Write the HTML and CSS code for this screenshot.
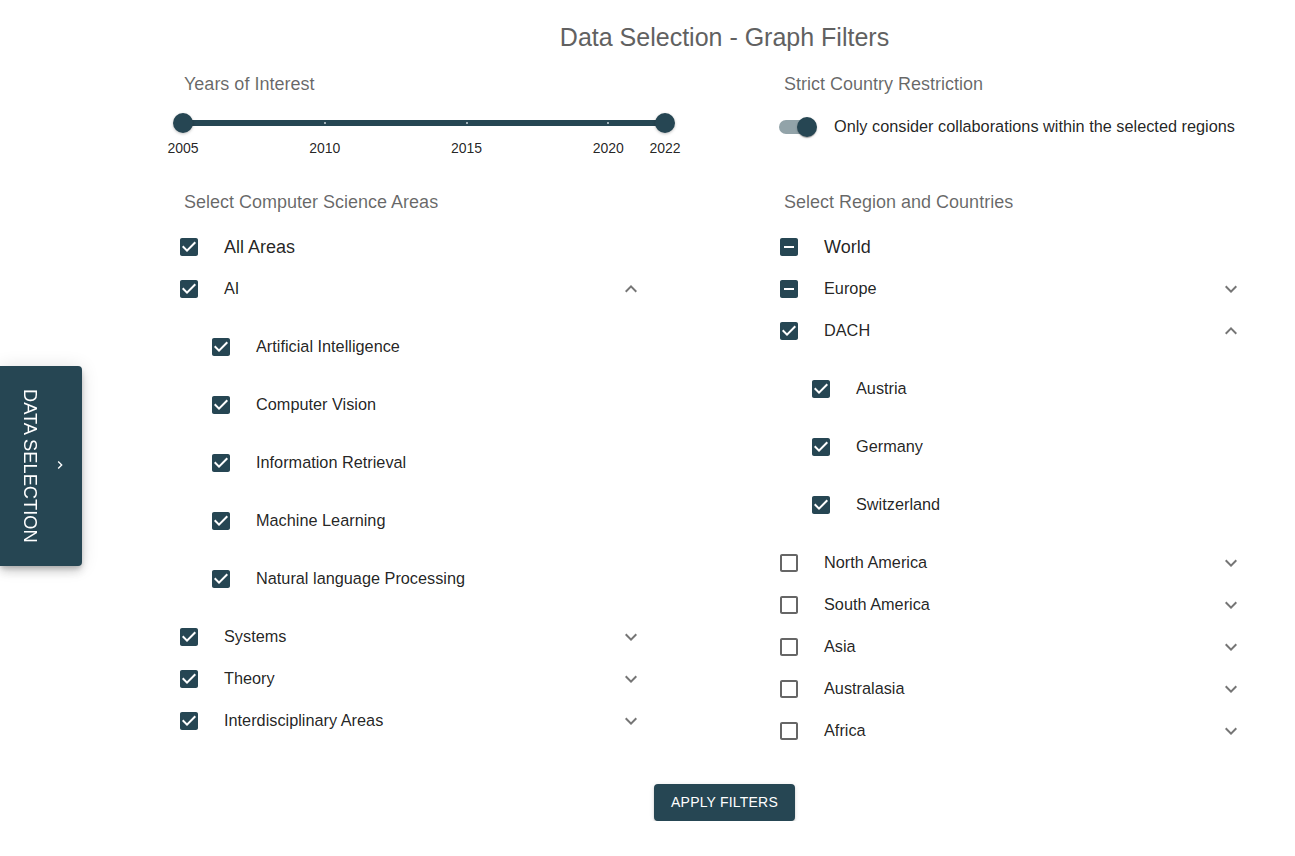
FILE: index.html
```html
<!DOCTYPE html>
<html lang="en">
<head>
<meta charset="utf-8">
<title>Data Selection - Graph Filters</title>
<link rel="stylesheet" href="styles.css">
</head>
<body>
<button class="drawer-tab" type="button">
  <span class="drawer-label">DATA SELECTION</span>
  <svg class="drawer-chev" viewBox="0 0 24 24"><path d="M10 6 8.59 7.41 13.17 12l-4.58 4.59L10 18l6-6z"/></svg>
</button>

<main class="main">
  <h1 class="title">Data Selection - Graph Filters</h1>

  <div class="grid">
    <section class="col">
      <div class="top-block">
        <h2 class="heading">Years of Interest</h2>
        <div class="slider">
          <div class="slider-rail">
            <span class="track"></span>
            <span class="mark" style="left:29.41%"></span>
            <span class="mark" style="left:58.82%"></span>
            <span class="mark" style="left:88.24%"></span>
            <span class="thumb" style="left:0%"></span>
            <span class="thumb" style="left:100%"></span>
          </div>
          <div class="slider-labels">
            <span class="mlabel" style="left:0%">2005</span>
            <span class="mlabel" style="left:29.41%">2010</span>
            <span class="mlabel" style="left:58.82%">2015</span>
            <span class="mlabel" style="left:88.24%">2020</span>
            <span class="mlabel" style="left:100%">2022</span>
          </div>
        </div>
      </div>

      <h2 class="heading list-heading">Select Computer Science Areas</h2>
      <ul class="list">
        <li class="row big"><svg class="cb on" viewBox="0 0 24 24"><path d="M19 3H5c-1.11 0-2 .9-2 2v14c0 1.1.89 2 2 2h14c1.11 0 2-.9 2-2V5c0-1.1-.89-2-2-2zm-9 14l-5-5 1.41-1.41L10 14.17l7.59-7.59L19 8l-9 9z"/></svg><span class="lbl">All Areas</span></li>
        <li class="row"><svg class="cb on" viewBox="0 0 24 24"><path d="M19 3H5c-1.11 0-2 .9-2 2v14c0 1.1.89 2 2 2h14c1.11 0 2-.9 2-2V5c0-1.1-.89-2-2-2zm-9 14l-5-5 1.41-1.41L10 14.17l7.59-7.59L19 8l-9 9z"/></svg><span class="lbl">AI</span><svg class="chev" viewBox="0 0 24 24"><path d="m12 8-6 6 1.41 1.41L12 10.83l4.59 4.58L18 14z"/></svg></li>
        <li>
          <ul class="sublist">
            <li class="subrow"><svg class="cb on" viewBox="0 0 24 24"><path d="M19 3H5c-1.11 0-2 .9-2 2v14c0 1.1.89 2 2 2h14c1.11 0 2-.9 2-2V5c0-1.1-.89-2-2-2zm-9 14l-5-5 1.41-1.41L10 14.17l7.59-7.59L19 8l-9 9z"/></svg><span class="lbl">Artificial Intelligence</span></li>
            <li class="subrow"><svg class="cb on" viewBox="0 0 24 24"><path d="M19 3H5c-1.11 0-2 .9-2 2v14c0 1.1.89 2 2 2h14c1.11 0 2-.9 2-2V5c0-1.1-.89-2-2-2zm-9 14l-5-5 1.41-1.41L10 14.17l7.59-7.59L19 8l-9 9z"/></svg><span class="lbl">Computer Vision</span></li>
            <li class="subrow"><svg class="cb on" viewBox="0 0 24 24"><path d="M19 3H5c-1.11 0-2 .9-2 2v14c0 1.1.89 2 2 2h14c1.11 0 2-.9 2-2V5c0-1.1-.89-2-2-2zm-9 14l-5-5 1.41-1.41L10 14.17l7.59-7.59L19 8l-9 9z"/></svg><span class="lbl">Information Retrieval</span></li>
            <li class="subrow"><svg class="cb on" viewBox="0 0 24 24"><path d="M19 3H5c-1.11 0-2 .9-2 2v14c0 1.1.89 2 2 2h14c1.11 0 2-.9 2-2V5c0-1.1-.89-2-2-2zm-9 14l-5-5 1.41-1.41L10 14.17l7.59-7.59L19 8l-9 9z"/></svg><span class="lbl">Machine Learning</span></li>
            <li class="subrow"><svg class="cb on" viewBox="0 0 24 24"><path d="M19 3H5c-1.11 0-2 .9-2 2v14c0 1.1.89 2 2 2h14c1.11 0 2-.9 2-2V5c0-1.1-.89-2-2-2zm-9 14l-5-5 1.41-1.41L10 14.17l7.59-7.59L19 8l-9 9z"/></svg><span class="lbl">Natural language Processing</span></li>
          </ul>
        </li>
        <li class="row"><svg class="cb on" viewBox="0 0 24 24"><path d="M19 3H5c-1.11 0-2 .9-2 2v14c0 1.1.89 2 2 2h14c1.11 0 2-.9 2-2V5c0-1.1-.89-2-2-2zm-9 14l-5-5 1.41-1.41L10 14.17l7.59-7.59L19 8l-9 9z"/></svg><span class="lbl">Systems</span><svg class="chev" viewBox="0 0 24 24"><path d="M16.59 8.59 12 13.17 7.41 8.59 6 10l6 6 6-6z"/></svg></li>
        <li class="row"><svg class="cb on" viewBox="0 0 24 24"><path d="M19 3H5c-1.11 0-2 .9-2 2v14c0 1.1.89 2 2 2h14c1.11 0 2-.9 2-2V5c0-1.1-.89-2-2-2zm-9 14l-5-5 1.41-1.41L10 14.17l7.59-7.59L19 8l-9 9z"/></svg><span class="lbl">Theory</span><svg class="chev" viewBox="0 0 24 24"><path d="M16.59 8.59 12 13.17 7.41 8.59 6 10l6 6 6-6z"/></svg></li>
        <li class="row"><svg class="cb on" viewBox="0 0 24 24"><path d="M19 3H5c-1.11 0-2 .9-2 2v14c0 1.1.89 2 2 2h14c1.11 0 2-.9 2-2V5c0-1.1-.89-2-2-2zm-9 14l-5-5 1.41-1.41L10 14.17l7.59-7.59L19 8l-9 9z"/></svg><span class="lbl">Interdisciplinary Areas</span><svg class="chev" viewBox="0 0 24 24"><path d="M16.59 8.59 12 13.17 7.41 8.59 6 10l6 6 6-6z"/></svg></li>
      </ul>
    </section>

    <section class="col">
      <div class="top-block">
        <h2 class="heading">Strict Country Restriction</h2>
        <div class="switch-row">
          <span class="switch"><span class="switch-track"></span><span class="switch-thumb"></span></span>
          <span class="switch-lbl">Only consider collaborations within the selected regions</span>
        </div>
      </div>

      <h2 class="heading list-heading">Select Region and Countries</h2>
      <ul class="list">
        <li class="row big"><svg class="cb on" viewBox="0 0 24 24"><path d="M19 3H5c-1.1 0-2 .9-2 2v14c0 1.1.9 2 2 2h14c1.1 0 2-.9 2-2V5c0-1.1-.9-2-2-2zm-2 10H7v-2h10v2z"/></svg><span class="lbl">World</span></li>
        <li class="row"><svg class="cb on" viewBox="0 0 24 24"><path d="M19 3H5c-1.1 0-2 .9-2 2v14c0 1.1.9 2 2 2h14c1.1 0 2-.9 2-2V5c0-1.1-.9-2-2-2zm-2 10H7v-2h10v2z"/></svg><span class="lbl">Europe</span><svg class="chev" viewBox="0 0 24 24"><path d="M16.59 8.59 12 13.17 7.41 8.59 6 10l6 6 6-6z"/></svg></li>
        <li class="row"><svg class="cb on" viewBox="0 0 24 24"><path d="M19 3H5c-1.11 0-2 .9-2 2v14c0 1.1.89 2 2 2h14c1.11 0 2-.9 2-2V5c0-1.1-.89-2-2-2zm-9 14l-5-5 1.41-1.41L10 14.17l7.59-7.59L19 8l-9 9z"/></svg><span class="lbl">DACH</span><svg class="chev" viewBox="0 0 24 24"><path d="m12 8-6 6 1.41 1.41L12 10.83l4.59 4.58L18 14z"/></svg></li>
        <li>
          <ul class="sublist">
            <li class="subrow"><svg class="cb on" viewBox="0 0 24 24"><path d="M19 3H5c-1.11 0-2 .9-2 2v14c0 1.1.89 2 2 2h14c1.11 0 2-.9 2-2V5c0-1.1-.89-2-2-2zm-9 14l-5-5 1.41-1.41L10 14.17l7.59-7.59L19 8l-9 9z"/></svg><span class="lbl">Austria</span></li>
            <li class="subrow"><svg class="cb on" viewBox="0 0 24 24"><path d="M19 3H5c-1.11 0-2 .9-2 2v14c0 1.1.89 2 2 2h14c1.11 0 2-.9 2-2V5c0-1.1-.89-2-2-2zm-9 14l-5-5 1.41-1.41L10 14.17l7.59-7.59L19 8l-9 9z"/></svg><span class="lbl">Germany</span></li>
            <li class="subrow"><svg class="cb on" viewBox="0 0 24 24"><path d="M19 3H5c-1.11 0-2 .9-2 2v14c0 1.1.89 2 2 2h14c1.11 0 2-.9 2-2V5c0-1.1-.89-2-2-2zm-9 14l-5-5 1.41-1.41L10 14.17l7.59-7.59L19 8l-9 9z"/></svg><span class="lbl">Switzerland</span></li>
          </ul>
        </li>
        <li class="row"><svg class="cb off" viewBox="0 0 24 24"><path d="M19 5v14H5V5h14m0-2H5c-1.1 0-2 .9-2 2v14c0 1.1.9 2 2 2h14c1.1 0 2-.9 2-2V5c0-1.1-.9-2-2-2z"/></svg><span class="lbl">North America</span><svg class="chev" viewBox="0 0 24 24"><path d="M16.59 8.59 12 13.17 7.41 8.59 6 10l6 6 6-6z"/></svg></li>
        <li class="row"><svg class="cb off" viewBox="0 0 24 24"><path d="M19 5v14H5V5h14m0-2H5c-1.1 0-2 .9-2 2v14c0 1.1.9 2 2 2h14c1.1 0 2-.9 2-2V5c0-1.1-.9-2-2-2z"/></svg><span class="lbl">South America</span><svg class="chev" viewBox="0 0 24 24"><path d="M16.59 8.59 12 13.17 7.41 8.59 6 10l6 6 6-6z"/></svg></li>
        <li class="row"><svg class="cb off" viewBox="0 0 24 24"><path d="M19 5v14H5V5h14m0-2H5c-1.1 0-2 .9-2 2v14c0 1.1.9 2 2 2h14c1.1 0 2-.9 2-2V5c0-1.1-.9-2-2-2z"/></svg><span class="lbl">Asia</span><svg class="chev" viewBox="0 0 24 24"><path d="M16.59 8.59 12 13.17 7.41 8.59 6 10l6 6 6-6z"/></svg></li>
        <li class="row"><svg class="cb off" viewBox="0 0 24 24"><path d="M19 5v14H5V5h14m0-2H5c-1.1 0-2 .9-2 2v14c0 1.1.9 2 2 2h14c1.1 0 2-.9 2-2V5c0-1.1-.9-2-2-2z"/></svg><span class="lbl">Australasia</span><svg class="chev" viewBox="0 0 24 24"><path d="M16.59 8.59 12 13.17 7.41 8.59 6 10l6 6 6-6z"/></svg></li>
        <li class="row"><svg class="cb off" viewBox="0 0 24 24"><path d="M19 5v14H5V5h14m0-2H5c-1.1 0-2 .9-2 2v14c0 1.1.9 2 2 2h14c1.1 0 2-.9 2-2V5c0-1.1-.9-2-2-2z"/></svg><span class="lbl">Africa</span><svg class="chev" viewBox="0 0 24 24"><path d="M16.59 8.59 12 13.17 7.41 8.59 6 10l6 6 6-6z"/></svg></li>
      </ul>
    </section>
  </div>

  <div class="actions">
    <button class="apply" type="button">APPLY FILTERS</button>
  </div>
</main>
</body>
</html>
```

FILE: styles.css
```css
* { box-sizing: border-box; }

html, body {
  margin: 0;
  padding: 0;
  background: #ffffff;
  font-family: "Liberation Sans", Arial, sans-serif;
  color: rgba(0, 0, 0, 0.87);
}

ul { list-style: none; margin: 0; padding: 0; }

/* Drawer tab on the left edge (overlays the page) */
.drawer-tab {
  position: fixed;
  left: 0;
  top: 366px;
  width: 82px;
  height: 200px;
  border: none;
  border-radius: 0 4px 4px 0;
  background: #264653;
  color: #ffffff;
  box-shadow: 0 3px 5px -1px rgba(0,0,0,0.2), 0 6px 10px 0 rgba(0,0,0,0.14), 0 1px 18px 0 rgba(0,0,0,0.12);
  display: flex;
  align-items: center;
  padding: 0 0 0 20px;
  gap: 12px;
  cursor: pointer;
  font-family: "Liberation Sans", Arial, sans-serif;
}
.drawer-label {
  writing-mode: vertical-rl;
  font-size: 18.3px;
  line-height: 20px;
  white-space: nowrap;
}
.drawer-chev {
  width: 16px;
  height: 16px;
  fill: #ffffff;
  margin-top: -2px;
}

.main {
  margin-left: 154px;
  width: 1141px;
}

.title {
  margin: 0;
  padding-top: 22px;
  font-size: 25px;
  line-height: 30px;
  font-weight: 400;
  text-align: center;
  color: #616161;
}

.grid {
  margin-left: 23px;
  margin-top: 20px;
  display: grid;
  grid-template-columns: 490px 490px;
  column-gap: 110px;
  align-items: start;
}

.col { display: flex; flex-direction: column; }

.heading {
  margin: 0;
  padding-left: 7px;
  font-size: 18px;
  line-height: 24px;
  font-weight: 400;
  color: rgba(0, 0, 0, 0.6);
}

.top-block { height: 118px; }

/* Slider */
.slider {
  margin-left: 6px;
  width: 482px;
  padding-top: 17px;
}
.slider-rail {
  position: relative;
  height: 20px;
}
.track {
  position: absolute;
  left: 0;
  right: 0;
  top: 7px;
  height: 6px;
  background: #264653;
  border-radius: 3px;
}
.mark {
  position: absolute;
  top: 9px;
  width: 2px;
  height: 2px;
  margin-left: -1px;
  background: #c9d3d8;
  border-radius: 1px;
}
.thumb {
  position: absolute;
  top: 0;
  width: 20px;
  height: 20px;
  margin-left: -10px;
  border-radius: 50%;
  background: #264653;
  box-shadow: 0 1px 3px rgba(0,0,0,0.25);
}
.slider-labels {
  position: relative;
  height: 18px;
  margin-top: 7px;
}
.mlabel {
  position: absolute;
  top: 0;
  transform: translateX(-50%);
  font-size: 14px;
  line-height: 16px;
  color: rgba(0, 0, 0, 0.87);
  white-space: nowrap;
}

/* Switch */
.switch-row {
  display: flex;
  align-items: center;
  margin-top: 20px;
  height: 22px;
}
.switch {
  position: relative;
  width: 40px;
  height: 20px;
  margin-left: 2px;
  flex: none;
}
.switch-track {
  position: absolute;
  left: 0;
  top: 3px;
  width: 34px;
  height: 14px;
  border-radius: 7px;
  background: #92a3a9;
}
.switch-thumb {
  position: absolute;
  left: 18px;
  top: 0;
  width: 20px;
  height: 20px;
  border-radius: 50%;
  background: #264653;
  box-shadow: 0 2px 1px -1px rgba(0,0,0,0.2), 0 1px 1px 0 rgba(0,0,0,0.14), 0 1px 3px 0 rgba(0,0,0,0.12);
}
.switch-lbl {
  margin-left: 15px;
  padding-bottom: 2px;
  font-size: 16.3px;
  white-space: nowrap;
}

/* Lists */
.list-heading { margin-bottom: 12px; }

.row, .subrow {
  display: flex;
  align-items: center;
  font-size: 16.3px;
}
.row { height: 42px; }
.row.big { font-size: 18px; }
.sublist { padding: 8px 0 8px 32px; }
.subrow { height: 58px; }

.cb {
  width: 24px;
  height: 24px;
  flex: none;
}
.cb.on { fill: #264653; }
.cb.off { fill: rgba(0, 0, 0, 0.6); }

.lbl {
  margin-left: 23px;
  padding-bottom: 2px;
  color: rgba(0, 0, 0, 0.87);
  white-space: nowrap;
}
.row.big .lbl { padding-bottom: 0; }

.chev {
  width: 24px;
  height: 24px;
  margin-left: auto;
  margin-right: 24px;
  fill: rgba(0, 0, 0, 0.54);
  flex: none;
}

/* Apply button */
.actions {
  display: flex;
  justify-content: center;
  margin-top: 32px;
}
.apply {
  border: none;
  border-radius: 4px;
  background: #264653;
  color: #ffffff;
  font-family: "Liberation Sans", Arial, sans-serif;
  font-size: 14px;
  line-height: 17px;
  letter-spacing: 0.2px;
  padding: 10px 16px;
  width: 141px;
  box-shadow: 0 3px 1px -2px rgba(0,0,0,0.2), 0 2px 2px 0 rgba(0,0,0,0.14), 0 1px 5px 0 rgba(0,0,0,0.12);
  cursor: pointer;
}
```
